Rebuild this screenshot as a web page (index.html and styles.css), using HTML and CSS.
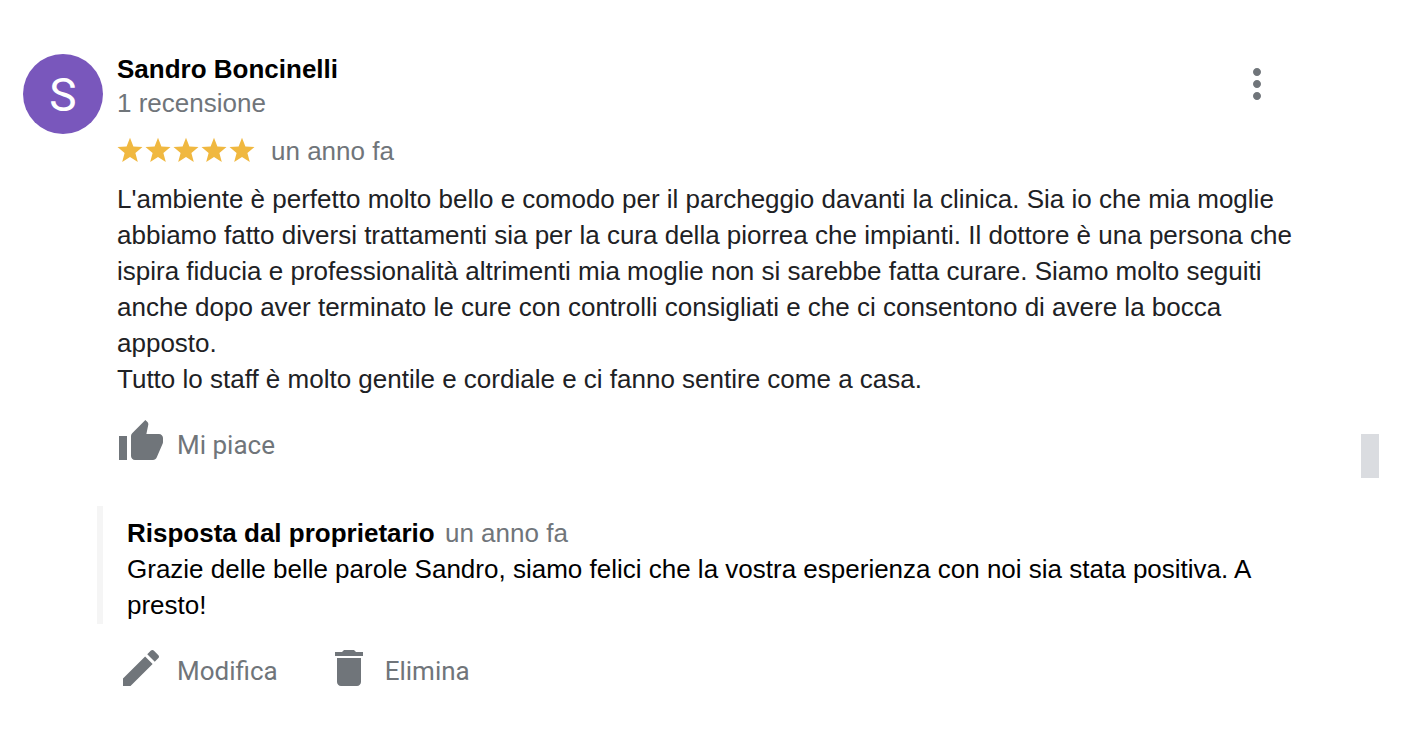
FILE: index.html
```
<!DOCTYPE html>
<html lang="it">
<head>
    <meta charset="UTF-8">
    <title>Recensione</title>
    <link rel="stylesheet" href="styles.css">
</head>
<body>
<svg class="sprite">
    <symbol id="star" viewBox="0 0 28 28">
        <path d="M13 .8l3.4 8.6 9.1.5-7.1 6 2.4 9L13 19.9l-7.8 5 2.4-9-7.1-6 9.1-.5z"/>
    </symbol>
</svg>
<div class="page">
    <article class="review">
        <div class="avatar">S</div>
        <div class="content">
            <header class="head">
                <div class="author">
                    <h2 class="name">Sandro Boncinelli</h2>
                    <div class="count">1 recensione</div>
                </div>
                <button type="button" class="menu" aria-label="Altre opzioni">
                    <svg class="icon" viewBox="0 0 24 24">
                        <path d="M12 8c1.1 0 2-.9 2-2s-.9-2-2-2-2 .9-2 2 .9 2 2 2zm0 2c-1.1 0-2 .9-2 2s.9 2 2 2 2-.9 2-2-.9-2-2-2zm0 6c-1.1 0-2 .9-2 2s.9 2 2 2 2-.9 2-2-.9-2-2-2z"/>
                    </svg>
                </button>
            </header>

            <div class="rating">
                <div class="stars" role="img" aria-label="5 stelle su 5">
                    <svg><use href="#star"/></svg>
                    <svg><use href="#star"/></svg>
                    <svg><use href="#star"/></svg>
                    <svg><use href="#star"/></svg>
                    <svg><use href="#star"/></svg>
                </div>
                <span class="date">un anno fa</span>
            </div>

            <p class="text">L'ambiente è perfetto molto bello e comodo per il parcheggio davanti la clinica. Sia io che mia moglie abbiamo fatto diversi trattamenti sia per la cura della piorrea che impianti. Il dottore è una persona che ispira fiducia e professionalità altrimenti mia moglie non si sarebbe fatta curare. Siamo molto seguiti anche dopo aver terminato le cure con controlli consigliati e che ci consentono di avere la bocca apposto.<br>Tutto lo staff è molto gentile e cordiale e ci fanno sentire come a casa.</p>

            <div class="actions">
                <button type="button" class="action">
                    <svg class="icon" viewBox="0 0 24 24">
                        <path d="M1 21h4V9H1v12zm22-11c0-1.1-.9-2-2-2h-6.31l.95-4.57.03-.32c0-.41-.17-.79-.44-1.06L14.17 1 7.59 7.59C7.22 7.95 7 8.45 7 9v10c0 1.1.9 2 2 2h9c.83 0 1.54-.5 1.84-1.22l3.02-7.05c.09-.23.14-.47.14-.73v-2z"/>
                    </svg>
                    <span>Mi piace</span>
                </button>
            </div>

            <section class="reply">
                <h3 class="owner">Risposta dal proprietario</h3>
                <span class="date">un anno fa</span>
                <p>Grazie delle belle parole Sandro, siamo felici che la vostra esperienza con noi sia stata positiva. A presto!</p>
            </section>

            <div class="actions">
                <button type="button" class="action">
                    <svg class="icon" viewBox="0 0 24 24">
                        <path d="M3 17.25V21h3.75L17.81 9.94l-3.75-3.75L3 17.25zM20.71 7.04c.39-.39.39-1.02 0-1.41l-2.34-2.34c-.39-.39-1.02-.39-1.41 0l-1.83 1.83 3.75 3.75 1.83-1.83z"/>
                    </svg>
                    <span>Modifica</span>
                </button>
                <button type="button" class="action">
                    <svg class="icon" viewBox="0 0 24 24">
                        <path d="M6 19c0 1.1.9 2 2 2h8c1.1 0 2-.9 2-2V7H6v12zM19 4h-3.5l-1-1h-5l-1 1H5v2h14V4z"/>
                    </svg>
                    <span>Elimina</span>
                </button>
            </div>
        </div>
    </article>
    <div class="scroll">
        <div class="thumb"></div>
    </div>
</div>
</body>
</html>
```

FILE: styles.css
```
* {
    box-sizing: border-box;
}

body {
    margin: 0;
    background-color: #fff;
    color: #000;
    font-family: "Liberation Sans", Arial, sans-serif;
    font-size: 26px;
    line-height: 36px;
}

h2, h3, p {
    margin: 0;
    font-size: 26px;
}

button {
    padding: 0;
    border: 0;
    background: none;
    color: #70757a;
    cursor: pointer;
}

.sprite {
    display: none;
}

.page {
    display: flex;
    padding: 0 31px 0 23px;
}

.review {
    display: flex;
    flex: 1;
    gap: 14px;
    padding: 52px 56px 40px 0;
}

.avatar {
    flex: none;
    width: 80px;
    height: 80px;
    margin-top: 2px;
    border-radius: 50%;
    background-color: #7957bc;
    color: #fff;
    font-family: Roboto, sans-serif;
    font-size: 46px;
    line-height: 82px;
    text-align: center;
}

.content {
    flex: 1;
}

.head {
    display: flex;
    justify-content: space-between;
    align-items: flex-start;
    padding-right: 24px;
    line-height: 34px;
}

.menu {
    margin-top: 8px;
}

.icon {
    display: block;
    width: 48px;
    height: 48px;
    fill: #70757a;
}

.count, .date {
    color: #70757a;
}

.rating {
    display: flex;
    gap: 14px;
    margin: 13px 0 12px;
}

.stars {
    display: flex;
    padding-top: 4px;
}

.stars svg {
    width: 28px;
    height: 28px;
    fill: #f0b840;
}

.text {
    margin-bottom: 21px;
    color: #202124;
}

.actions {
    display: flex;
    gap: 47px;
    margin-top: 20px;
}

.action {
    display: flex;
    align-items: center;
    gap: 12px;
    font-family: Roboto, sans-serif;
    font-size: 26px;
    line-height: 36px;
}

.action span {
    padding-top: 6px;
}

/* the grey bar hangs out to the left of the review text */
.reply {
    margin: 40px 0 0 -20px;
    padding: 9px 0 1px 24px;
    border-left: 6px solid #f5f5f5;
}

.owner {
    display: inline-block;
    margin-right: 3px;
}

.scroll {
    flex: none;
    width: 18px;
    padding-top: 434px;
}

.thumb {
    height: 44px;
    background-color: #dadce0;
}
```
